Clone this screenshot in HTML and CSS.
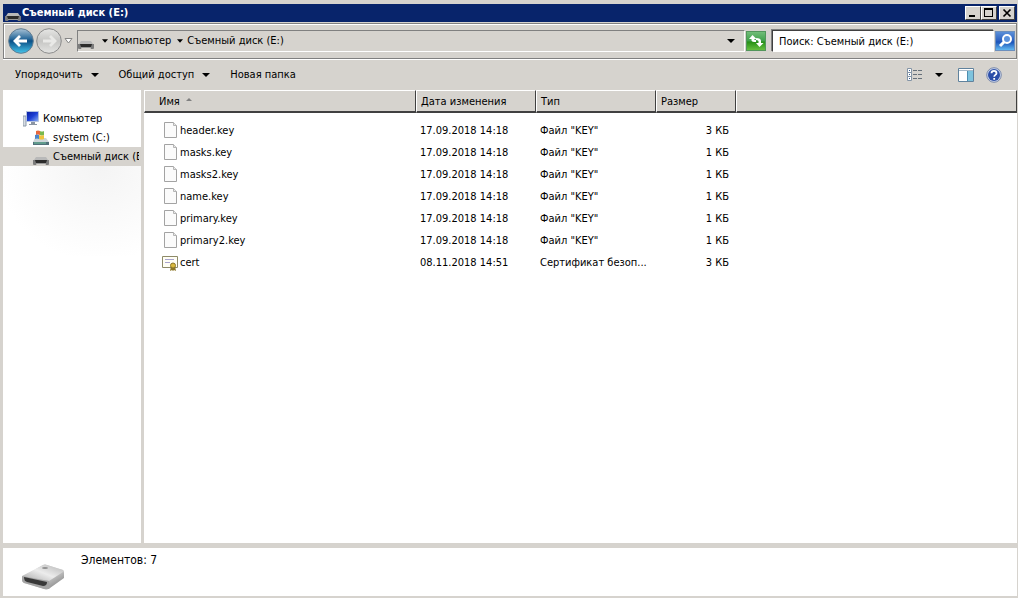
FILE: index.html
```html
<!DOCTYPE html>
<html lang="ru">
<head>
<meta charset="utf-8">
<title>Съемный диск (E:)</title>
<link rel="stylesheet" href="styles.css">
</head>
<body>
<svg class="defs" aria-hidden="true">
  <defs>
    <linearGradient id="blue" x1="0" y1="0" x2="0" y2="1"><stop offset="0" stop-color="#a9c3d6"/><stop offset=".4" stop-color="#2d6c9c"/><stop offset=".5" stop-color="#0b4f86"/><stop offset="1" stop-color="#45c5ec"/></linearGradient>
    <linearGradient id="grey" x1="0" y1="0" x2="0" y2="1"><stop offset="0" stop-color="#e6e6e4"/><stop offset=".5" stop-color="#c6c6c4"/><stop offset="1" stop-color="#e4e4e2"/></linearGradient>
    <linearGradient id="metal" x1="0" y1="0" x2="1" y2="1"><stop offset="0" stop-color="#b4b4b4"/><stop offset=".5" stop-color="#d8d8d8"/><stop offset="1" stop-color="#707070"/></linearGradient>
    <linearGradient id="top" x1="0" y1="1" x2="1" y2="0"><stop offset="0" stop-color="#a8a8a8"/><stop offset=".5" stop-color="#ececec"/><stop offset="1" stop-color="#b4b4b4"/></linearGradient>
    <linearGradient id="screen" x1="0" y1="0" x2="1" y2="1"><stop offset="0" stop-color="#0a1c9c"/><stop offset=".5" stop-color="#1c3fd4"/><stop offset="1" stop-color="#8fb4f4"/></linearGradient>
    <symbol id="drive" viewBox="0 0 16 16">
      <path d="M3 8h10l2 3H1z" fill="#b9b9b9"/><path d="M0 11h16v4q0 1-1 1h-2l-1-2H4l-1 2H1q-1 0-1-1z" fill="#7c7c7c"/><path d="M2 11h12l-1 3H3z" fill="#2c2c2c"/><path d="M3 14.500h10" stroke="#999"/>
    </symbol>
    <symbol id="file" viewBox="0 0 14 17">
      <path d="M.5.5h9l3 3v12H.5z" fill="#fbfbfb" stroke="#a3a3a3"/><path d="M9.500.5v3h3" fill="#e8e8e8" stroke="#b5b5b5"/>
    </symbol>
    <symbol id="down" viewBox="0 0 8 4"><path d="M0 0h8L4 4z"/></symbol>
  </defs>
</svg>
<div class="window">
  <header class="titlebar">
    <svg class="icon"><use href="#drive"/></svg>
    <h1 class="title">Съемный диск (E:)</h1>
    <div class="captions">
      <button class="caption" aria-label="Свернуть"><svg width="12" height="10"><path d="M2 7h6v2H2z"/></svg></button>
      <button class="caption" aria-label="Развернуть"><svg width="12" height="10"><path d="M1 0h9v9H1zM2 2v6h7V2z" fill-rule="evenodd"/></svg></button>
      <button class="caption caption-close" aria-label="Закрыть"><svg width="12" height="10"><path d="M2.500 1.500l7 7m0-7l-7 7" stroke="#000" stroke-width="1.700"/></svg></button>
    </div>
  </header>
  <nav class="navbar">
    <div class="travel">
      <button class="plain" aria-label="Назад"><svg width="26" height="26" viewBox="0 0 26 26"><circle cx="13" cy="13" r="12.300" fill="url(#blue)" stroke="#607c92"/><path d="M12 8l-5 5 5 5M7.500 13H19" fill="none" stroke="#fff" stroke-width="2.800"/></svg></button>
      <button class="plain" aria-label="Вперед"><svg width="26" height="26" viewBox="0 0 26 26"><circle cx="13" cy="13" r="12.300" fill="url(#grey)" stroke="#8b8b8b"/><path d="M14 8l5 5-5 5M18.500 13H7" fill="none" stroke="#e9e9e7" stroke-width="2.800"/></svg></button>
      <button class="plain" aria-label="Последние страницы"><svg width="9" height="6"><path d="M1 .5h7L4.500 5z" fill="#fff" stroke="#858585"/></svg></button>
    </div>
    <div class="address">
      <svg class="icon"><use href="#drive"/></svg>
      <svg class="crumb-arrow" viewBox="0 0 5 3"><path d="M0 0h5L2.500 3z"/></svg>
      <a class="crumb" href="#">Компьютер</a>
      <svg class="crumb-arrow" viewBox="0 0 5 3"><path d="M0 0h5L2.500 3z"/></svg>
      <a class="crumb" href="#">Съемный диск (E:)</a>
      <button class="plain history" aria-label="Предыдущие расположения"><svg class="down"><use href="#down"/></svg></button>
    </div>
    <button class="refresh" aria-label="Обновить"><svg width="18" height="18" viewBox="0 0 18 18"><path d="M5.500 3L2 7h2.500v1.500Q5 10 9 10V8Q7 8 7 7h2.500zM12.500 15L9 11h2.500V9Q11 8 9 8V6q5 0 5 3v2h2.500z" fill="#fff"/></svg></button>
    <input class="search" type="text" aria-label="Поиск" value="Поиск: Съемный диск (E:)">
    <button class="find" aria-label="Найти"><svg width="18" height="18" viewBox="0 0 18 18"><circle cx="11" cy="7" r="4" fill="#5c92dc" stroke="#fff" stroke-width="2"/><path d="M8 10l-4 4" stroke="#fff" stroke-width="3"/></svg></button>
  </nav>
  <div class="toolbar">
    <button class="command">Упорядочить <svg class="down"><use href="#down"/></svg></button>
    <button class="command">Общий доступ <svg class="down"><use href="#down"/></svg></button>
    <button class="command">Новая папка</button>
    <div class="tools">
      <button class="plain" aria-label="Вид"><svg width="16" height="14" viewBox="0 0 16 14"><g fill="#fff" stroke="#8494a6"><path d="M.5.5h4v4h-4zM.5 4.500h4v4h-4zM.5 8.500h4v4h-4z"/></g><path d="M2 2h1v1H2zM2 6h1v1H2zM2 10h1v1H2z" fill="#345c90"/><path d="M6 2.500h4m1 0h4M6 6.500h4m1 0h4M6 10.500h4m1 0h4" stroke="#66707a"/></svg></button>
      <button class="plain" aria-label="Другие виды"><svg class="down"><use href="#down"/></svg></button>
      <button class="plain preview" aria-label="Область просмотра"><svg width="16" height="14" viewBox="0 0 16 14"><path d="M.5.5h15v13H.5z" fill="#fff" stroke="#60829d"/><path d="M1 2.500h14" stroke="#a7bac8"/><path d="M10 3h5v10h-5z" fill="#7ec3dd"/><path d="M9.500 3v10" stroke="#4e8eb0"/></svg></button>
      <button class="plain" aria-label="Справка"><svg width="16" height="16" viewBox="0 0 16 16"><circle cx="8" cy="8" r="7.300" fill="#c9d4ec" stroke="#7c8bac"/><circle cx="8" cy="8" r="6" fill="#2c4ea8"/><path d="M5.500 6.200c0-3.200 5-3.200 5 0 0 1.700-2.300 1.700-2.300 3.500M8.200 11v1.800" fill="none" stroke="#fff" stroke-width="1.800"/></svg></button>
    </div>
  </div>
  <div class="content">
    <aside class="tree">
      <a class="node" href="#"><svg class="icon" viewBox="0 0 16 16"><path d="M0 5h3v10H0z" fill="#d6dce3" stroke="#8e9baa"/><path d="M3.500.5h12v10h-12z" fill="url(#screen)" stroke="#b5c3e0"/><path d="M8 11h4v2h2v1H6v-1h2z" fill="#8b95a3"/></svg><span class="label">Компьютер</span></a>
      <a class="node node-child" href="#"><svg class="icon" viewBox="0 0 16 16"><path d="M2 8h11l3 4H0z" fill="#cdd5d8"/><path d="M0 12h16v3H0z" fill="#51707a"/><path d="M1 13h12" stroke="#75c8a0"/><path d="M3 1q2-1 4 0v4q-2-1-4 0z" fill="#e8693c"/><path d="M7 1q2 1 4 0v4q-2 1-4 0z" fill="#79b84e"/><path d="M2 5q2-1 4 0v4q-2-1-4 0z" fill="#4b86cb"/><path d="M6 5q2 1 5 0v4q-3 1-5 0z" fill="#efc33b"/></svg><span class="label">system (C:)</span></a>
      <a class="node node-child node-selected" href="#"><svg class="icon"><use href="#drive"/></svg><span class="label">Съемный диск (E:)</span></a>
      <div class="glow"></div>
    </aside>
    <main class="files">
      <table class="list">
        <colgroup><col class="col-name"><col class="col-date"><col class="col-type"><col class="col-size"><col></colgroup>
        <thead><tr><th class="first">Имя <svg class="sort" viewBox="0 0 6 3"><path d="M0 3h6L3 0z"/></svg></th><th>Дата изменения</th><th>Тип</th><th>Размер</th><th></th></tr></thead>
        <tbody>
          <tr><td class="first"><span class="name"><svg class="doc"><use href="#file"/></svg>header.key</span></td><td>17.09.2018 14:18</td><td>Файл "KEY"</td><td class="size">3 КБ</td><td></td></tr>
          <tr><td class="first"><span class="name"><svg class="doc"><use href="#file"/></svg>masks.key</span></td><td>17.09.2018 14:18</td><td>Файл "KEY"</td><td class="size">1 КБ</td><td></td></tr>
          <tr><td class="first"><span class="name"><svg class="doc"><use href="#file"/></svg>masks2.key</span></td><td>17.09.2018 14:18</td><td>Файл "KEY"</td><td class="size">1 КБ</td><td></td></tr>
          <tr><td class="first"><span class="name"><svg class="doc"><use href="#file"/></svg>name.key</span></td><td>17.09.2018 14:18</td><td>Файл "KEY"</td><td class="size">1 КБ</td><td></td></tr>
          <tr><td class="first"><span class="name"><svg class="doc"><use href="#file"/></svg>primary.key</span></td><td>17.09.2018 14:18</td><td>Файл "KEY"</td><td class="size">1 КБ</td><td></td></tr>
          <tr><td class="first"><span class="name"><svg class="doc"><use href="#file"/></svg>primary2.key</span></td><td>17.09.2018 14:18</td><td>Файл "KEY"</td><td class="size">1 КБ</td><td></td></tr>
          <tr><td class="first"><span class="name"><svg class="icon" viewBox="0 0 16 16"><path d="M.5 1.500h15v11H.5z" fill="#fffef5" stroke="#8e8a68"/><path d="M3 4.500h9M3 7.500h5" stroke="#a9a4cf"/><path d="M9 11l-1 5 2-1 1 1 1-1 2 1-1-5z" fill="#8c7626"/><circle cx="11" cy="10.500" r="2.500" fill="#d9b93c" stroke="#8c7626"/></svg>cert</span></td><td>08.11.2018 14:51</td><td>Сертификат безоп...</td><td class="size">3 КБ</td><td></td></tr>
        </tbody>
      </table>
    </main>
  </div>
  <footer class="details">
    <svg class="bigdrive" viewBox="0 0 46 26"><path d="M1 13L22 1q2-1 4 0l16 5q1 1 1 3v5L29 24q-2 2-5 1L3 19q-2-1-2-3z" fill="url(#metal)"/><path d="M1 12L22 1q2-1 4 0l16 5q1 1 0 2L28 17z" fill="url(#top)"/><path d="M1 12l27 5 1 7q-3 2-6 1L3 19q-2-1-2-3z" fill="#a4a4a4"/><path d="M3 13l23 5q0 4-4 4L6 18q-3-1-3-5z" fill="#383838"/><ellipse cx="24" cy="4" rx="3" ry="1" fill="#909090"/></svg>
    <p class="count">Элементов: 7</p>
  </footer>
</div>
</body>
</html>
```
FILE: styles.css
```css
* { box-sizing: border-box; }
body {
  margin: 0;
  background: #d6d3ce;
  color: #000;
  font: 11px/14px "DejaVu Sans Condensed", "Noto Sans", sans-serif;
}
button, input { font: inherit; color: inherit; }
svg { display: block; flex: none; }
a { color: inherit; text-decoration: none; }
.defs { position: absolute; width: 0; height: 0; }
.icon { width: 16px; height: 16px; }
.down { width: 8px; height: 4px; }
.plain { display: flex; padding: 0; border: 0; background: none; }

.window {
  display: flex;
  flex-direction: column;
  height: 100vh;
  padding: 4px 1px 2px 3px;
}

.titlebar {
  display: flex;
  align-items: center;
  flex: none;
  height: 18px;
  padding: 0 2px;
  background: #08246b;
  color: #fff;
}
.title { flex: 1; margin: 0 1px; font-size: 11px; font-weight: bold; }
.captions { display: flex; }
.caption {
  display: flex;
  justify-content: center;
  align-items: center;
  width: 16px;
  height: 14px;
  padding: 0;
  border: 1px solid;
  border-color: #fff #404040 #404040 #fff;
  background: #d6d3ce;
}
.caption-close { margin-left: 2px; }

.navbar {
  display: flex;
  align-items: center;
  flex: none;
  height: 36px;
  margin-top: 1px;
  padding: 0 1px 0 4px;
  border: 1px solid #808080;
  box-shadow: inset 1px 1px #fff, 0 1px #fff;
}
.travel { display: flex; align-items: center; gap: 2px; width: 69px; }
.address {
  display: flex;
  align-items: center;
  flex: 1;
  height: 22px;
  border: 1px solid;
  border-color: #808080 #fff #fff #808080;
}
.crumb-arrow { width: 6px; height: 4px; margin: 0 4px 0 6px; }
.address .icon + .crumb-arrow { margin-left: 8px; }
.history { margin: 0 9px 0 auto; }
.refresh {
  display: flex;
  align-items: center;
  justify-content: center;
  width: 20px;
  height: 20px;
  margin: 0 6px 0 1px;
  padding: 0;
  border: 1px solid #52965b;
  background: linear-gradient(#71bd78, #3fa04a 50%, #269016 55%, #66c040);
}
.search {
  width: 222px;
  height: 22px;
  padding: 0 6px;
  border: 1px solid;
  border-color: #404040 #fff #fff #404040;
  background: #fff;
  box-shadow: -1px -1px #808080;
}
.find {
  display: flex;
  align-items: center;
  justify-content: center;
  width: 20px;
  height: 20px;
  margin-left: 1px;
  padding: 0;
  border: 1px solid #6c8fbd;
  background: linear-gradient(#5b8fd8, #2a5fc0 50%, #1a52b8 55%, #62b8f0);
}

.toolbar { display: flex; align-items: center; flex: none; height: 31px; padding: 0 15px 0 12px; gap: 20px; }
.command { display: flex; align-items: center; gap: 8px; padding: 0; border: 0; background: none; white-space: nowrap; }
.tools { display: flex; align-items: center; gap: 12px; margin-left: auto; }
.preview { margin-left: 3px; }

.content { display: flex; flex: 1; min-height: 0; gap: 3px; }
.tree { width: 138px; flex: none; padding-top: 19px; background: #fff; }
.node { display: flex; align-items: center; gap: 4px; height: 19px; padding: 1px 2px 0 20px; white-space: nowrap; }
.node-child { padding-left: 30px; }
.node-selected { background: #d6d3ce; }
.label { overflow: hidden; }
.glow { height: 90px; background: radial-gradient(ellipse at 70% 0, #f4f4f4, #fff 75%); }

.files { flex: 1; min-width: 0; background: #fff; }
.list { width: 100%; table-layout: fixed; border-collapse: separate; border-spacing: 0; }
.col-name { width: 272px; }
.col-date, .col-type { width: 120px; }
.col-size { width: 80px; }
.list th {
  height: 23px;
  padding: 2px 0 0 4px;
  border-top: 1px solid #fff;
  border-left: 1px solid #fff;
  border-right: 1px solid #404040;
  border-bottom: 2px solid #404040;
  background: #d6d3ce;
  font-weight: normal;
  text-align: left;
}
.list th.first { padding-left: 14px; }
.sort { display: inline-block; width: 6px; height: 3px; margin: 0 0 4px 3px; fill: #808080; }
.list td { height: 22px; padding: 1px 4px 0; white-space: nowrap; }
.list td.first { padding-left: 18px; }
.list tbody::before { content: ""; display: block; height: 6px; }
.list .size { padding-right: 7px; text-align: right; }
.name { display: flex; align-items: center; gap: 2px; }
.doc { width: 14px; height: 17px; margin-left: 2px; }

.details { display: flex; flex: none; height: 53px; gap: 14px; padding: 5px 18px; border-top: 5px solid #d6d3ce; background: #fff; }
.bigdrive { width: 46px; height: 26px; margin-top: 11px; }
.count { margin: 0; font-size: 12px; }
```
